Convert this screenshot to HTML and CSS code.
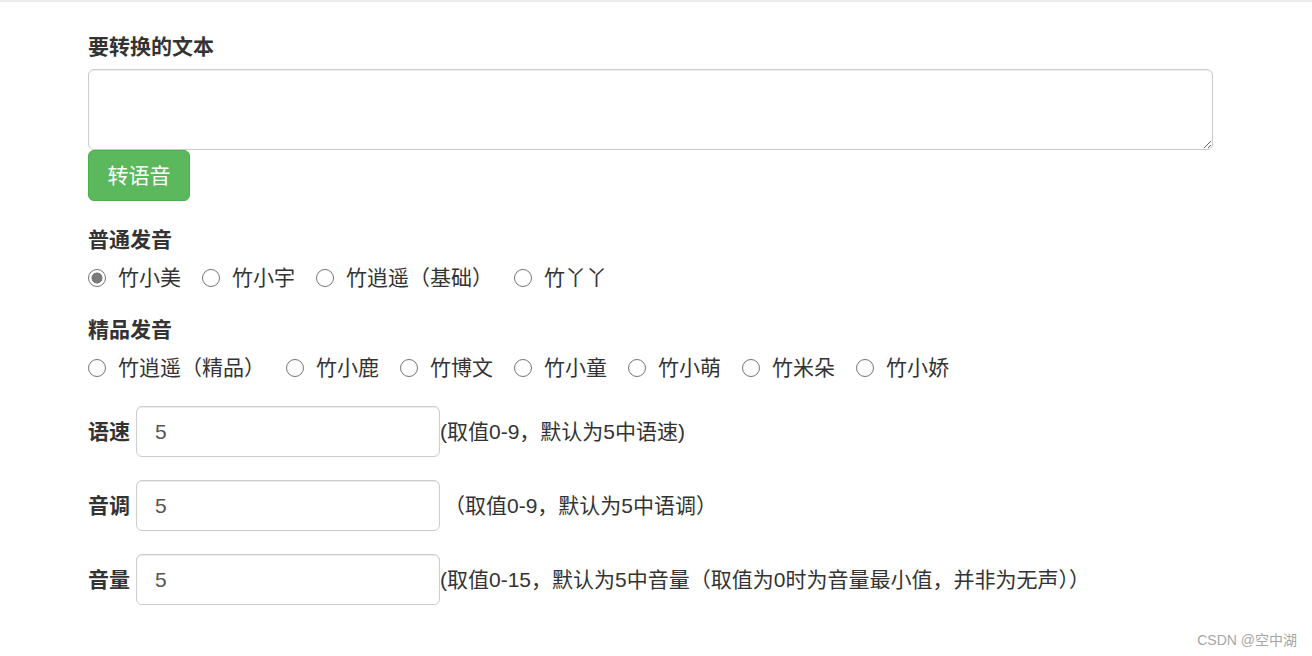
FILE: index.html
```html
<!DOCTYPE html>
<html lang="zh">
<head>
<meta charset="utf-8">
<title>文本转语音</title>
<link rel="stylesheet" href="styles.css">
</head>
<body>
<div class="topline"></div>
<div class="container">
  <div class="field">
    <label class="lbl">要转换的文本</label>
    <textarea class="text-input"></textarea>
    <button class="btn-success" type="button">转语音</button>
  </div>

  <div class="group first">
    <div class="lbl">普通发音</div>
    <div class="radios">
      <label class="opt"><input type="radio" name="v1" checked><span>竹小美</span></label>
      <label class="opt"><input type="radio" name="v1"><span>竹小宇</span></label>
      <label class="opt"><input type="radio" name="v1"><span>竹逍遥（基础）</span></label>
      <label class="opt"><input type="radio" name="v1"><span>竹丫丫</span></label>
    </div>
  </div>

  <div class="group">
    <div class="lbl">精品发音</div>
    <div class="radios">
      <label class="opt"><input type="radio" name="v2"><span>竹逍遥（精品）</span></label>
      <label class="opt"><input type="radio" name="v2"><span>竹小鹿</span></label>
      <label class="opt"><input type="radio" name="v2"><span>竹博文</span></label>
      <label class="opt"><input type="radio" name="v2"><span>竹小童</span></label>
      <label class="opt"><input type="radio" name="v2"><span>竹小萌</span></label>
      <label class="opt"><input type="radio" name="v2"><span>竹米朵</span></label>
      <label class="opt"><input type="radio" name="v2"><span>竹小娇</span></label>
    </div>
  </div>

  <div class="params">
    <div class="param">
      <label class="lbl plabel">语速</label>
      <input class="num" type="text" value="5">
      <span class="hint">(取值0-9，默认为5中语速)</span>
    </div>
    <div class="param">
      <label class="lbl plabel">音调</label>
      <input class="num" type="text" value="5">
      <span class="hint hint-gap">（取值0-9，默认为5中语调）</span>
    </div>
    <div class="param">
      <label class="lbl plabel">音量</label>
      <input class="num" type="text" value="5">
      <span class="hint">(取值0-15，默认为5中音量（取值为0时为音量最小值，并非为无声））</span>
    </div>
  </div>
</div>
<div class="watermark">CSDN @空中湖</div>
</body>
</html>
```

FILE: styles.css
```css
html, body {
  margin: 0;
  padding: 0;
  background: #fff;
}
body {
  font-family: "Liberation Sans", "Noto Sans CJK SC", sans-serif;
  font-size: 21px;
  line-height: 30px;
  color: #333;
  height: 656px;
  position: relative;
  overflow: hidden;
}
.topline {
  height: 2px;
  background: #ececec;
}
.container {
  width: 1125px;
  margin-left: 88px;
  padding-top: 30px;
}
.field {
  display: flex;
  flex-direction: column;
  align-items: flex-start;
}
.lbl {
  font-weight: bold;
  display: block;
}
.field .lbl {
  margin-bottom: 7px;
}
.text-input {
  box-sizing: border-box;
  width: 1125px;
  height: 81px;
  margin: 0;
  border: 1px solid #ccc;
  border-radius: 6px;
  box-shadow: inset 0 1px 1px rgba(0,0,0,0.075);
  font: inherit;
  padding: 9px 18px;
  resize: both;
  display: block;
}
.btn-success {
  box-sizing: border-box;
  height: 51px;
  width: 102px;
  margin: 0;
  background: #5cb85c;
  border: 1px solid #4cae4c;
  border-radius: 6px;
  color: #fff;
  font-family: inherit;
  font-size: 21px;
  line-height: 30px;
  padding: 0;
  cursor: pointer;
}
.group.first {
  margin-top: 24px;
}
.group {
  margin-top: 22px;
}
.radios {
  display: flex;
  margin-top: 8px;
  gap: 21px;
}
.opt {
  display: flex;
  align-items: center;
  gap: 12px;
}
.opt input {
  appearance: none;
  -webkit-appearance: none;
  margin: 0;
  width: 18px;
  height: 18px;
  border: 1.5px solid #767676;
  border-radius: 50%;
  box-sizing: border-box;
  background: #fff;
}
.opt input:checked {
  background: radial-gradient(circle, #7a7a7a 0 5.2px, #fff 5.8px);
}
.params {
  margin-top: 23px;
  display: flex;
  flex-direction: column;
  gap: 23px;
}
.param {
  display: flex;
  align-items: center;
}
.plabel {
  width: 48px;
}
.num {
  box-sizing: border-box;
  width: 304px;
  height: 51px;
  margin: 0;
  border: 1px solid #ccc;
  border-radius: 6px;
  box-shadow: inset 0 1px 1px rgba(0,0,0,0.075);
  padding: 0 18px;
  font-family: inherit;
  font-size: 21px;
  color: #555;
}
.hint {
  white-space: nowrap;
}
.hint-gap {
  margin-left: 4px;
}
.watermark {
  position: absolute;
  right: 15px;
  bottom: 8px;
  font-size: 14px;
  line-height: 16px;
  color: #a6a6a6;
}
```
